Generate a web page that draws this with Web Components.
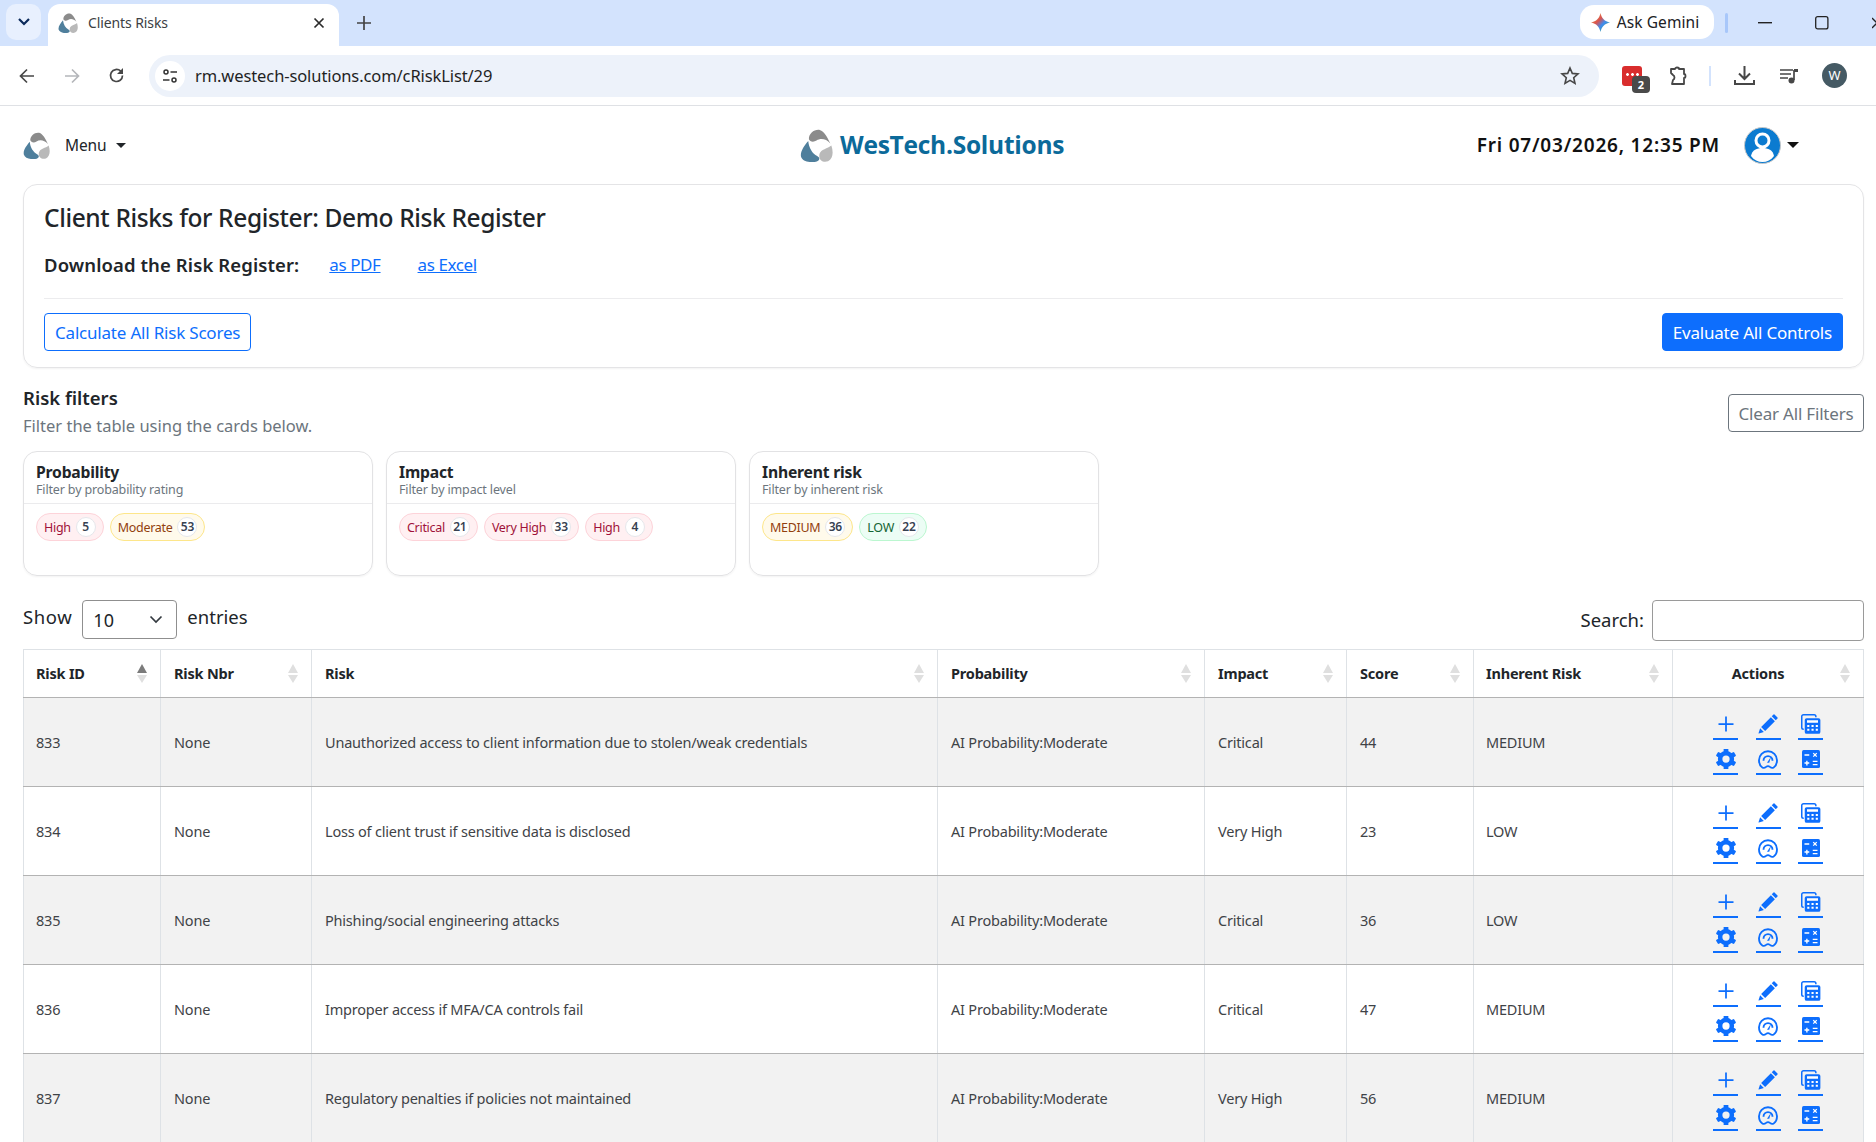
<!DOCTYPE html>
<html lang="en">
<head>
<meta charset="utf-8">
<title>Clients Risks</title>
<style>
    html, body { margin: 0; padding: 0; height: 1142px; overflow: hidden; background: #fff; }
    body { font-family: "Noto Sans", "Liberation Sans", sans-serif; color: #212529; }
</style>
</head>
<body>
<browser-chrome></browser-chrome>
<app-nav></app-nav>
<main-area>
    <register-card></register-card>
    <filter-section>
        <filter-card title-text="Probability" sub="Filter by probability rating">
            <filter-pill tone="red" label="High" count="5"></filter-pill>
            <filter-pill tone="amber" label="Moderate" count="53"></filter-pill>
        </filter-card>
        <filter-card title-text="Impact" sub="Filter by impact level">
            <filter-pill tone="red" label="Critical" count="21"></filter-pill>
            <filter-pill tone="red" label="Very High" count="33"></filter-pill>
            <filter-pill tone="red" label="High" count="4"></filter-pill>
        </filter-card>
        <filter-card title-text="Inherent risk" sub="Filter by inherent risk">
            <filter-pill tone="amber" label="MEDIUM" count="36"></filter-pill>
            <filter-pill tone="green" label="LOW" count="22"></filter-pill>
        </filter-card>
    </filter-section>
    <table-controls></table-controls>
    <risk-table></risk-table>
</main-area>

<script>
const UI_FONT = `"Noto Sans", "Liberation Sans", sans-serif`;

const LOGO_PATHS = `
    <path fill="#8b8b8b" d="M27 31C26 14 44 0 60 3c13 3 24 24 32 41C79 29 62 27 50 35c-9 6-20 4-23-4z"/>
    <path fill="#4f7f9c" d="M25 36C13 50 0 68 3 83c4 15 26 19 42 17 15-2 18-12 7-18C38 74 27 58 25 36z"/>
    <path fill="#b9b9b9" d="M95 50c7 20 5 40-10 48-15 5-30-3-26-22 4-15 25-16 36-26z"/>`;

class BrowserChrome extends HTMLElement {
    constructor() {
        super();
        this.attachShadow({ mode: "open" });
        this.shadowRoot.innerHTML = `
            <style>
                :host { display: block; font-family: ${UI_FONT}; }
                .strip { height: 46px; background: #d3e3fd; display: flex; align-items: flex-end; box-sizing: border-box; }
                .tabs-btn { width: 35px; height: 36px; margin: 0 7px 6px 6px; border-radius: 10px; background: #e8f0fe; display: flex; align-items: center; justify-content: center; }
                .tab { width: 291px; height: 42px; background: #fff; border-radius: 12px 12px 0 0; display: flex; align-items: center; box-sizing: border-box; padding: 0 14px 5px 10px; font-size: 14px; letter-spacing: -.1px; color: #3c4043; }
                .tab svg.fav { margin-right: 10px; }
                .tab span { flex: 1; }
                .plus { margin: 0 0 16px 18px; }
                .gemini { margin: 0 11px 7px auto; width: 134px; height: 34px; box-sizing: border-box; padding-right: 4px; background: #fff; border-radius: 14px; display: flex; align-items: center; justify-content: center; gap: 7px; font-size: 15.5px; color: #202124; letter-spacing: .1px; }
                .sep1 { width: 3px; height: 20px; background: #a8c7fa; border-radius: 2px; margin: 0 0 13px 0; }
                .win { display: flex; align-items: center; margin: 0 0 16px 0; }
                .win span { display: flex; justify-content: center; align-items: center; }
                .toolbar { height: 59px; border-bottom: 1px solid #dfe1e5; background: #fff; display: flex; align-items: center; box-sizing: content-box; }
                .nav-ico { width: 45px; display: flex; justify-content: center; }
                .omni { margin-left: 10px; width: 1450px; height: 42px; border-radius: 21px; background: #edf2fa; display: flex; align-items: center; padding: 0 19px 0 6px; box-sizing: border-box; }
                .site { width: 30px; height: 30px; border-radius: 50%; background: #fff; display: flex; align-items: center; justify-content: center; margin-right: 10px; }
                .url { flex: 1; font-size: 16.5px; letter-spacing: -.1px; color: #1f1f1f; }
                .ext { position: relative; width: 20px; height: 20px; margin-left: 23px; background: #d92d2d; border-radius: 3px; }
                .ext i { position: absolute; left: 3px; top: 7px; width: 14px; height: 3px; background: radial-gradient(circle, #fff 1.3px, transparent 1.5px) 0 0 / 5px 3px repeat-x; }
                .ext b { position: absolute; left: 10px; top: 10px; width: 18px; height: 17px; border-radius: 4px; background: #4a4a4a; color: #fff; font: 700 11px/17px ${UI_FONT}; text-align: center; }
                .tools { display: flex; align-items: center; }
                .avatar { width: 25px; height: 25px; border-radius: 50%; background: #455a64; color: #fff; font-size: 13px; line-height: 25px; text-align: center; }
                .sep2 { width: 2px; height: 20px; background: #d3e3fd; }
            </style>
            <div class="strip">
                <div class="tabs-btn"><svg width="14" height="10" viewBox="0 0 14 10"><path d="M2 2l5 5 5-5" fill="none" stroke="#0b2a5b" stroke-width="2.2"/></svg></div>
                <div class="tab">
                    <svg class="fav" width="20" height="20" viewBox="0 0 100 100">${LOGO_PATHS}</svg>
                    <span>Clients Risks</span>
                    <svg width="12" height="12" viewBox="0 0 12 12"><path d="M1.5 1.5l9 9m0-9l-9 9" stroke="#2b2b2b" stroke-width="1.7"/></svg>
                </div>
                <svg class="plus" width="14" height="14" viewBox="0 0 14 14"><path d="M7 0v14M0 7h14" stroke="#444" stroke-width="1.7"/></svg>
                <div class="gemini">
                    <svg width="19" height="19" viewBox="0 0 20 20"><defs><linearGradient id="g" x1="0" y1="0" x2="1" y2="1"><stop offset="0" stop-color="#e8a33a"/><stop offset=".4" stop-color="#d9534f"/><stop offset=".6" stop-color="#3f8cf0"/><stop offset="1" stop-color="#34a853"/></linearGradient></defs><path fill="url(#g)" d="M10 0c1 5.500 4.500 9 10 10-5.500 1-9 4.500-10 10-1-5.500-4.500-9-10-10 5.500-1 9-4.500 10-10z"/></svg>
                    <span>Ask Gemini</span>
                </div>
                <div class="sep1"></div>
                <div class="win">
                    <span style="width:74px"><svg width="14" height="2"><rect width="14" height="1.400" fill="#222"/></svg></span>
                    <span style="width:40px"><svg width="14" height="14"><rect x=".7" y=".7" width="12.200" height="12.200" rx="2" fill="none" stroke="#222" stroke-width="1.300"/></svg></span>
                    <span style="width:34px;justify-content:flex-end"><svg width="4" height="12" viewBox="0 0 4 12" style="display:block"><path d="M0 1l5 5L0 11" fill="none" stroke="#222" stroke-width="1.300"/></svg></span>
                </div>
            </div>
            <div class="toolbar">
                <span style="width:4px"></span>
                <div class="nav-ico"><svg width="16" height="16" viewBox="0 0 16 16"><path d="M15 8H2m6-6.500L1.500 8 8 14.500" fill="none" stroke="#474747" stroke-width="1.700"/></svg></div>
                <div class="nav-ico"><svg width="16" height="16" viewBox="0 0 16 16"><path d="M1 8h13M8 1.500L14.500 8 8 14.500" fill="none" stroke="#b4b6ba" stroke-width="1.700"/></svg></div>
                <div class="nav-ico"><svg width="17" height="17" viewBox="0 0 17 17"><path d="M14.500 8.500a6 6 0 1 1-1.800-4.300L14.500 6" fill="none" stroke="#474747" stroke-width="1.700"/><path d="M15 1v6H9z" fill="#474747"/></svg></div>
                <div class="omni">
                    <div class="site"><svg width="16" height="16" viewBox="0 0 16 16" fill="none" stroke="#333" stroke-width="1.500"><circle cx="4" cy="4" r="2"/><path d="M8.500 4H15M1 12h6.500"/><circle cx="12" cy="12" r="2"/></svg></div>
                    <div class="url">rm.westech-solutions.com/cRiskList/29</div>
                    <svg width="20" height="20" viewBox="0 0 20 20"><path d="M10 2l2.300 5.400 5.700.5-4.300 3.800 1.300 5.700L10 14.400 5 17.400l1.300-5.700L2 7.900l5.700-.5z" fill="none" stroke="#474747" stroke-width="1.600"/></svg>
                </div>
                <div class="tools">
                    <div class="ext"><i></i><b>2</b></div>
                    <svg style="margin-left:26px" width="21" height="20" viewBox="0 0 21 20"><path d="M3 3h4c0-2 4-2 4 0h5v5c2 0 2 4 0 4v6H4l1-4c2-1 2-4 0-5L3 7z" fill="none" stroke="#474747" stroke-width="1.800" stroke-linejoin="round"/></svg>
                    <span class="sep2" style="margin-left:20px"></span>
                    <svg style="margin-left:23px" width="21" height="21" viewBox="0 0 21 21"><path d="M10.500 1v12M5 8.500l5.500 5.500L16 8.500M1 15v4h19v-4" fill="none" stroke="#474747" stroke-width="2"/></svg>
                    <svg style="margin-left:24px" width="20" height="20" viewBox="0 0 20 20"><path d="M1 4h13M1 8h11M1 12h8M15 4v10" fill="none" stroke="#474747" stroke-width="1.700"/><circle cx="12.500" cy="14.500" r="3" fill="#474747"/><path d="M15 3h4v3h-4z" fill="#474747"/></svg>
                    <div class="avatar" style="margin-left:23px">W</div>
                </div>
            </div>`;
    }
}

class AppNav extends HTMLElement {
    constructor() {
        super();
        this.attachShadow({ mode: "open" });
        this.shadowRoot.innerHTML = `
            <style>
                :host { display: grid; grid-template-columns: 777px auto 1fr; align-items: center; height: 78px; padding: 0 77px 0 23px; font-family: ${UI_FONT}; }
                .left, .right { display: flex; align-items: center; }
                .right { justify-content: flex-end; }
                .menu { margin-left: 15px; font-size: 15.5px; letter-spacing: -.15px; color: #212529; }
                .caret { width: 0; height: 0; border: 5px solid transparent; border-top-color: #212529; border-bottom: 0; margin-left: 10px; }
                .brand { display: flex; align-items: center; gap: 7px; }
                .brand span { font: 700 24.500px "Open Sans", sans-serif; color: #0b6a9a; letter-spacing: -.25px; margin-top: -2px; }
                .date { font-size: 19px; font-weight: 600; color: #111; letter-spacing: .8px; margin-right: 24px; }
                .caret2 { width: 0; height: 0; border: 6px solid transparent; border-top-color: #111; border-bottom: 0; margin-left: 6px; }
            </style>
            <div class="left">
                <svg width="27" height="27" viewBox="0 0 100 100">${LOGO_PATHS}</svg>
                <span class="menu">Menu</span><span class="caret"></span>
            </div>
            <div class="brand">
                <svg width="33" height="33" viewBox="0 0 100 100">${LOGO_PATHS}</svg>
                <span>WesTech.Solutions</span>
            </div>
            <div class="right">
                <span class="date">Fri 07/03/2026, 12:35 PM</span>
                <svg width="37" height="37" viewBox="0 0 37 37"><circle cx="18.500" cy="18.500" r="18" fill="#0b7bd0" stroke="#c9c9c9"/><circle cx="18.500" cy="13.500" r="6.500" fill="none" stroke="#fff" stroke-width="3"/><path d="M7 29c1-6 6-8 11.500-8S29 23 30 29c-3 4-7 6-11.500 6S10 33 7 29z" fill="#fff"/></svg>
                <span class="caret2"></span>
            </div>`;
    }
}

class MainArea extends HTMLElement {
    constructor() {
        super();
        this.attachShadow({ mode: "open" });
        this.shadowRoot.innerHTML = `
            <style>:host { display: block; padding: 0 12px 0 23px; font-family: ${UI_FONT}; }</style>
            <slot></slot>`;
    }
}

class RegisterCard extends HTMLElement {
    constructor() {
        super();
        this.attachShadow({ mode: "open" });
        this.shadowRoot.innerHTML = `
            <style>
                :host { display: block; height: 184px; box-sizing: border-box; border: 1px solid #e4e4e6; border-radius: 14px; padding: 16px 20px 0 20px; box-shadow: 0 1px 2px rgba(0,0,0,.05); }
                h2 { margin: 0; font-size: 24.500px; line-height: 34px; font-weight: 500; color: #212529; letter-spacing: -.37px; }
                .dl { display: flex; align-items: center; height: 28px; margin-top: 15px; font-size: 18.500px; }
                .dl b { font-weight: 600; margin-right: 30px; letter-spacing: .1px; }
                a { color: #0d6efd; text-decoration: underline; font-size: 17px; letter-spacing: -.4px; margin-right: 37px; }
                hr { border: 0; border-top: 1px solid #ececee; margin: 20px 0 14px; }
                .btns { display: flex; justify-content: space-between; }
                button { font: inherit; font-size: 17px; letter-spacing: -.2px; height: 38px; padding: 0 10px; border-radius: 4px; border: 1px solid #0d6efd; background: #fff; color: #0d6efd; }
                button.solid { background: #0d6efd; color: #fff; }
            </style>
            <h2>Client Risks for Register: Demo Risk Register</h2>
            <div class="dl"><b>Download the Risk Register:</b><a>as PDF</a><a>as Excel</a></div>
            <hr>
            <div class="btns"><button>Calculate All Risk Scores</button><button class="solid">Evaluate All Controls</button></div>`;
    }
}

class FilterSection extends HTMLElement {
    constructor() {
        super();
        this.attachShadow({ mode: "open" });
        this.shadowRoot.innerHTML = `
            <style>
                :host { display: block; margin-top: 17px; }
                .head { display: flex; justify-content: space-between; align-items: flex-start; height: 66px; }
                h3 { margin: 0; font-size: 18.500px; line-height: 26px; font-weight: 600; }
                p { margin: 2px 0 0; font-size: 16.500px; line-height: 26px; color: #6c757d; }
                button { font: inherit; font-size: 17px; letter-spacing: -.2px; height: 38px; width: 136px; padding: 0; margin-top: 9px; border-radius: 4px; border: 1px solid #6c757d; background: #fff; color: #6c757d; }
                .cards { display: flex; gap: 13px; }
            </style>
            <div class="head">
                <div><h3>Risk filters</h3><p>Filter the table using the cards below.</p></div>
                <button>Clear All Filters</button>
            </div>
            <div class="cards"><slot></slot></div>`;
    }
}

class FilterCard extends HTMLElement {
    constructor() {
        super();
        this.attachShadow({ mode: "open" });
        this.shadowRoot.innerHTML = `
            <style>
                :host { display: block; width: 350px; height: 125px; box-sizing: border-box; border: 1px solid #e2e2e4; border-radius: 14px; box-shadow: 0 1px 2px rgba(0,0,0,.05); }
                .top { height: 52px; box-sizing: border-box; border-bottom: 1px solid #ebebed; padding: 10px 12px 0; }
                .t { font-size: 15.700px; font-weight: 700; line-height: 20px; letter-spacing: -.2px; color: #212529; }
                .s { font-size: 12.500px; line-height: 15px; color: #6c757d; letter-spacing: -.15px; }
                .body { display: flex; gap: 6px; padding: 9px 12px; }
            </style>
            <div class="top"><div class="t"></div><div class="s"></div></div>
            <div class="body"><slot></slot></div>`;
    }
    connectedCallback() {
        this.shadowRoot.querySelector(".t").textContent = this.getAttribute("title-text");
        this.shadowRoot.querySelector(".s").textContent = this.getAttribute("sub");
    }
}

class FilterPill extends HTMLElement {
    constructor() {
        super();
        this.attachShadow({ mode: "open" });
        this.shadowRoot.innerHTML = `
            <style>
                :host { display: inline-flex; align-items: center; height: 28px; box-sizing: border-box; border-radius: 14px; border: 1px solid; padding: 0 7px; font-size: 12.500px; letter-spacing: -.3px; gap: 5px; }
                :host([tone="red"]) { background: #fff0f2; border-color: #fdd3d9; color: #9f1239; }
                :host([tone="amber"]) { background: #fffaeb; border-color: #fde68a; color: #92400e; }
                :host([tone="green"]) { background: #ecfdf5; border-color: #bbf7d0; color: #166534; }
                b { display: block; width: 20px; height: 20px; line-height: 17px; box-sizing: border-box; border-radius: 50%; background: #fff; border: 1px solid #e5e7eb; color: #374151; font-size: 12px; font-weight: 600; text-align: center; letter-spacing: -.2px; }
            </style>
            <span class="l"></span><b></b>`;
    }
    connectedCallback() {
        this.shadowRoot.querySelector(".l").textContent = this.getAttribute("label");
        this.shadowRoot.querySelector("b").textContent = this.getAttribute("count");
    }
}

class TableControls extends HTMLElement {
    constructor() {
        super();
        this.attachShadow({ mode: "open" });
        this.shadowRoot.innerHTML = `
            <style>
                :host { display: flex; justify-content: space-between; align-items: flex-start; height: 41px; margin: 24px 0 8px; font-size: 18.500px; color: #212529; }
                .l, .r { display: flex; align-items: center; }
                .sel { width: 95px; height: 39px; box-sizing: border-box; margin: 0 10px; border: 1px solid #8f8f8f; border-radius: 4px; display: flex; align-items: center; justify-content: space-between; padding: 0 13px 0 10px; font-size: 18px; }
                .in { width: 212px; height: 41px; box-sizing: border-box; margin-left: 8px; border: 1px solid #9a9a9a; border-radius: 4px; }
            </style>
            <div class="l"><span style="margin-top:-6px;letter-spacing:.6px">Show</span><div class="sel"><span>10</span><svg width="14" height="9" viewBox="0 0 14 9"><path d="M1.500 1.500L7 7l5.500-5.500" fill="none" stroke="#343a40" stroke-width="1.700"/></svg></div><span style="margin-top:-6px">entries</span></div>
            <div class="r"><span style="margin-top:-2px">Search:</span><div class="in"></div></div>`;
    }
}

class ActionIcons extends HTMLElement {
    constructor() {
        super();
        this.attachShadow({ mode: "open" });
        const teeth = [0, 60, 120, 180, 240, 300].map((a) => `<rect x="6.100" y="-.3" width="3.800" height="4" rx=".7" fill="#0d6efd" transform="rotate(${a} 8 8)"/>`).join("");
        const items = [
            `<path d="M8 2v12M2 8h12" stroke="#0d6efd" stroke-width="1.400" fill="none"/>`,
            `<path fill="#0d6efd" d="M12.400.4a.6.6 0 0 1 .8 0l2.400 2.400a.6.6 0 0 1 0 .8l-1.400 1.400-3.200-3.200zM10.300 2.500l3.200 3.200-7.800 7.800-3.200-3.200zM1.700 11.300l3 3-4 1.300a.3.300 0 0 1-.3-.3z"/>`,
            `<path fill="none" stroke="#0d6efd" stroke-width="1.200" d="M2.200 12.200H2A1.400 1.400 0 0 1 .6 10.800V2A1.400 1.400 0 0 1 2 .6h8.500a1.400 1.400 0 0 1 1.400 1.400v.5"/><rect x="3" y="3.300" width="12.500" height="12.500" rx="1.500" fill="#0d6efd"/><path fill="#fff" d="M4.800 5h8.800v2H4.800zM5 8.800h1.700v1.500H5zM8.400 8.800h1.700v1.500H8.400zM11.800 8.800h1.700v1.500h-1.700zM5 11.800h1.700v1.500H5zM8.400 11.800h1.700v1.500H8.400zM11.800 11.800h1.700v1.500h-1.700z"/>`,
            `${teeth}<circle cx="8" cy="8" r="4.700" fill="none" stroke="#0d6efd" stroke-width="3.600"/>`,
            `<g fill="none" stroke="#0d6efd" stroke-width="1.500"><path d="M3.500 14.800C1.500 13.500.8 11 .8 9a7.200 7.200 0 0 1 14.400 0c0 2-.7 4.500-2.700 5.800-1 .6-2 .3-3-.5-1-.8-2-.8-3 0-1 .8-2 1.100-3 .5z"/><path d="M4.400 9.300a3.600 3.600 0 0 1 7.200 0"/></g><path fill="#0d6efd" d="M10.400 6.200L9 11H7.200z"/>`,
            `<rect x=".8" y=".8" width="14.400" height="14.400" rx="1.300" fill="#0d6efd"/><path stroke="#fff" stroke-width="1.100" fill="none" d="M2.800 4.800h3.800M9.800 3.300l2.800 2.800m0-2.800L9.800 6.100M2.800 11.200h3.800M4.700 9.300v3.800M9.400 9.900h3.800M9.400 12.500h3.800"/>`
        ];
        this.shadowRoot.innerHTML = `
            <style>
                :host { display: grid; grid-template-columns: repeat(3, 25px); column-gap: 17.500px; row-gap: 6px; justify-content: center; }
                a { display: flex; justify-content: center; align-items: center; height: 29px; box-sizing: border-box; border-bottom: 2px solid #0d6efd; }
                svg { width: 20px; height: 20px; }
            </style>
            ${items.map((p) => `<a><svg viewBox="0 0 16 16">${p}</svg></a>`).join("")}`;
    }
}

class RiskTable extends HTMLElement {
    constructor() {
        super();
        this.attachShadow({ mode: "open" });
        const heads = ["Risk ID", "Risk Nbr", "Risk", "Probability", "Impact", "Score", "Inherent Risk", "Actions"];
        const rows = [
            ["833", "None", "Unauthorized access to client information due to stolen/weak credentials", "AI Probability:Moderate", "Critical", "44", "MEDIUM"],
            ["834", "None", "Loss of client trust if sensitive data is disclosed", "AI Probability:Moderate", "Very High", "23", "LOW"],
            ["835", "None", "Phishing/social engineering attacks", "AI Probability:Moderate", "Critical", "36", "LOW"],
            ["836", "None", "Improper access if MFA/CA controls fail", "AI Probability:Moderate", "Critical", "47", "MEDIUM"],
            ["837", "None", "Regulatory penalties if policies not maintained", "AI Probability:Moderate", "Very High", "56", "MEDIUM"],
        ];
        const widths = [137, 151, 626, 267, 142, 127, 199, 191];
        this.shadowRoot.innerHTML = `
            <style>
                :host { display: block; font-size: 14.500px; letter-spacing: -.2px; }
                table { table-layout: fixed; width: 1840px; border-collapse: collapse; }
                th { position: relative; height: 48px; padding: 0 13px 2px; text-align: left; font-weight: 700; color: #212529; border: 1px solid #dee2e6; border-bottom: 1px solid #b3b3b3; box-sizing: border-box; }
                th:first-child, td:first-child, th:nth-child(7), td:nth-child(7) { padding-left: 12px; }
                th:last-child { text-align: center; padding-right: 33px; }
                th i { position: absolute; right: 13px; width: 0; height: 0; border-left: 5px solid transparent; border-right: 5px solid transparent; }
                th i.u { top: 14px; border-bottom: 9px solid #dfdfdf; }
                th i.d { top: 25px; border-top: 8px solid #dfdfdf; }
                th.on i.u { border-bottom-color: #7b7b7b; }
                td { height: 89px; padding: 0 13px; border: 1px solid #dee2e6; border-bottom: 1px solid #b3b3b3; color: #3f4347; box-sizing: border-box; }
                tr:nth-child(odd) td { background: #f2f2f2; }
                td.act { padding: 1px 0 0; }
            </style>
            <table>
                <colgroup>${widths.map((w) => `<col style="width:${w}px">`).join("")}</colgroup>
                <thead><tr>${heads.map((h, i) => `<th class="${i === 0 ? "on" : ""}">${h}<i class="u"></i><i class="d"></i></th>`).join("")}</tr></thead>
                <tbody>${rows.map((r) => `<tr>${r.map((c) => `<td>${c}</td>`).join("")}<td class="act"><action-icons></action-icons></td></tr>`).join("")}</tbody>
            </table>`;
    }
}

customElements.define("action-icons", ActionIcons);
customElements.define("browser-chrome", BrowserChrome);
customElements.define("app-nav", AppNav);
customElements.define("main-area", MainArea);
customElements.define("register-card", RegisterCard);
customElements.define("filter-section", FilterSection);
customElements.define("filter-card", FilterCard);
customElements.define("filter-pill", FilterPill);
customElements.define("table-controls", TableControls);
customElements.define("risk-table", RiskTable);
</script>
</body>
</html>
